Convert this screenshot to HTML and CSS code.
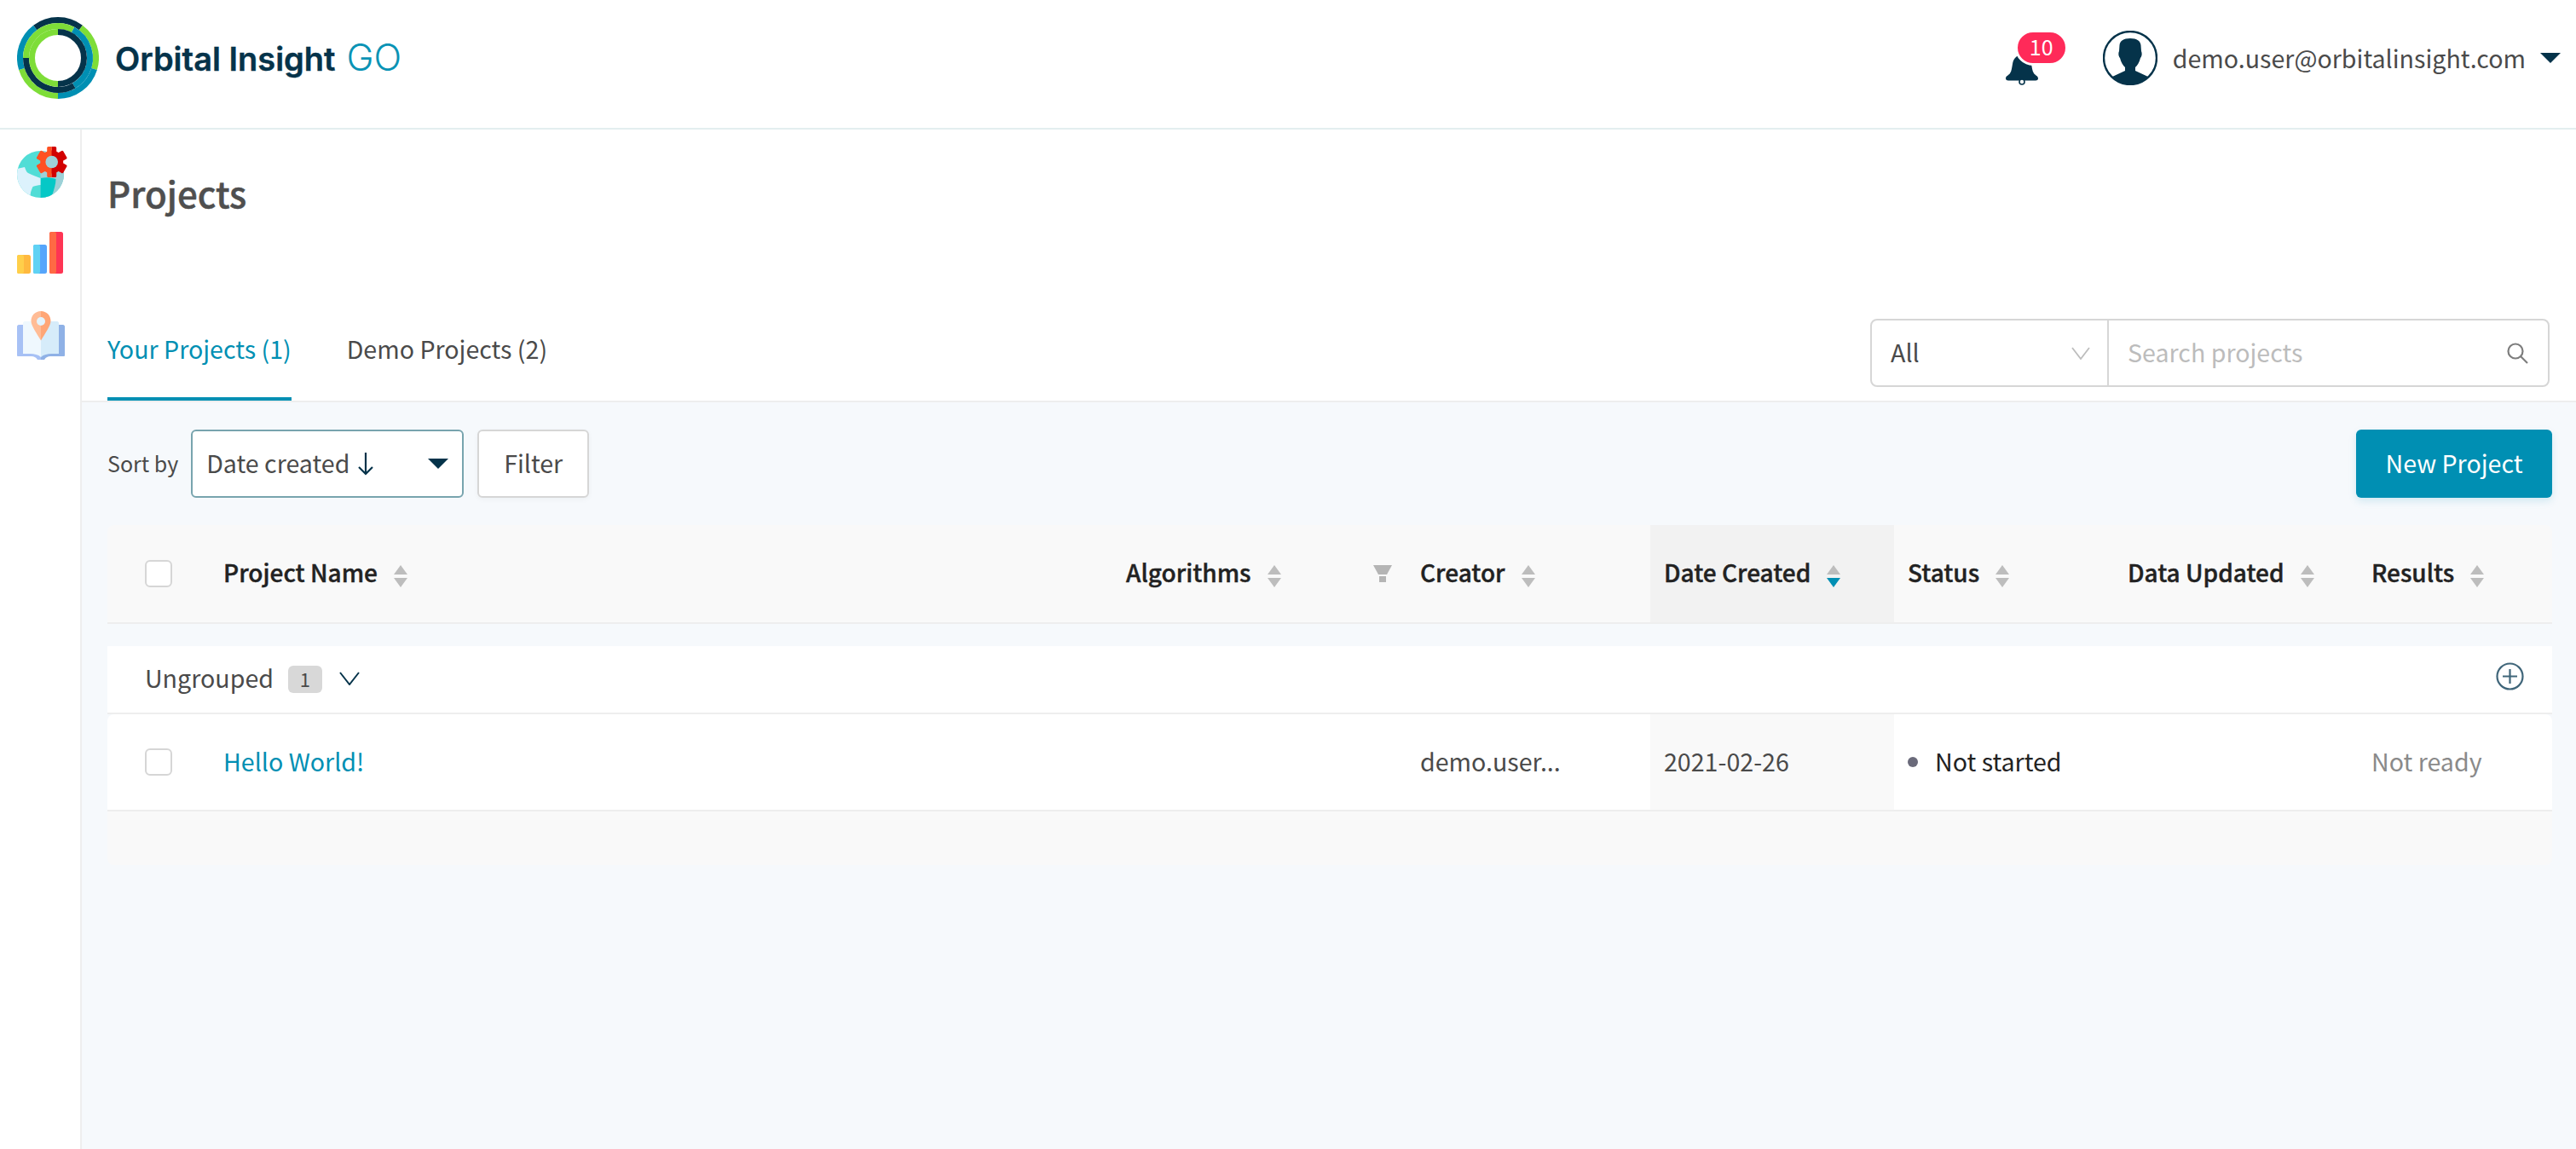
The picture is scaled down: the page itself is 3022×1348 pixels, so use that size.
FILE: index.html
```html
<!DOCTYPE html>
<html lang="en">
<head>
<meta charset="utf-8">
<title>Orbital Insight GO</title>
<link rel="stylesheet" href="styles.css">
</head>
<body>
<header class="topbar">
  <div class="brand">
    <svg class="logo" width="96" height="96" viewBox="0 0 96 96" fill="none" stroke-width="7">
      <g class="r1">
        <circle cx="48" cy="48" r="44.5" pathLength="360" stroke="#05334a" stroke-dasharray="74 286" transform="rotate(-127 48 48)"/>
        <circle cx="48" cy="48" r="44.5" pathLength="360" stroke="#7edd38" stroke-dasharray="70 290" transform="rotate(-53 48 48)"/>
        <circle cx="48" cy="48" r="44.5" pathLength="360" stroke="#008fb3" stroke-dasharray="73 287" transform="rotate(17 48 48)"/>
        <circle cx="48" cy="48" r="44.5" pathLength="360" stroke="#7edd38" stroke-dasharray="73 287" transform="rotate(90 48 48)"/>
        <circle cx="48" cy="48" r="44.5" pathLength="360" stroke="#008fb3" stroke-dasharray="70 290" transform="rotate(163 48 48)"/>
        <circle cx="48" cy="48" r="37.5" pathLength="360" stroke="#7edd38" stroke-dasharray="118 242" transform="rotate(180 48 48)"/>
        <circle cx="48" cy="48" r="37.5" pathLength="360" stroke="#008fb3" stroke-dasharray="122 238" transform="rotate(-62 48 48)"/>
        <circle cx="48" cy="48" r="37.5" pathLength="360" stroke="#05334a" stroke-dasharray="120 240" transform="rotate(60 48 48)"/>
        <circle cx="48" cy="48" r="30.5" pathLength="360" stroke="#05334a" stroke-dasharray="180 180" transform="rotate(-90 48 48)"/>
        <circle cx="48" cy="48" r="30.5" pathLength="360" stroke="#7edd38" stroke-dasharray="180 180" transform="rotate(90 48 48)"/>
      </g>
    </svg>
    <div class="wordmark"><span class="wm-name">Orbital Insight</span><span class="wm-go">GO</span></div>
  </div>
  <div class="account">
    <div class="bell">
      <svg width="38" height="36" viewBox="0 0 38 36">
        <path fill="#05334a" d="M19 0c-5 0-10 4-11 11-1 5-1 8-3 11-1 2-5 3-5 6 0 1.500 1 2.500 3 2.500h32c2 0 3-1 3-2.500 0-3-4-4-5-6-2-3-2-6-3-11C29 4 24 0 19 0z"/>
        <circle cx="19" cy="32" r="3" fill="#fff" stroke="#05334a" stroke-width="1.600"/>
      </svg>
      <span class="bell-badge">10</span>
    </div>
    <svg class="avatar" width="64" height="64" viewBox="0 0 64 64">
      <defs><clipPath id="avatar-clip"><circle cx="32" cy="32" r="30.500"/></clipPath></defs>
      <circle cx="32" cy="32" r="31" fill="#fff" stroke="#05334a" stroke-width="2.400"/>
      <path clip-path="url(#avatar-clip)" fill="#05334a" d="M32 9c-8 0-12 3-12.500 8L19 24c-1 2-1 6 1 8 1 5 4 9 6 11v4L11 54v10h42V54l-15-7v-4c2-2 5-6 6-11 2-2 2-6 1-8l-.5-7C44 12 40 9 32 9z"/>
    </svg>
    <span class="email">demo.user@orbitalinsight.com</span>
    <span class="caret caret-lg"></span>
  </div>
</header>

<div class="shell">
  <nav class="sidebar">
    <svg class="nav-globe" width="60" height="60" viewBox="0 0 60 60">
      <defs>
        <clipPath id="globe-clip"><circle cx="27.500" cy="32.500" r="27.500"/></clipPath>
        <clipPath id="gear-left"><rect x="20" y="-2" width="20.700" height="40"/></clipPath>
        <clipPath id="gear-right"><rect x="40.700" y="-2" width="21" height="40"/></clipPath>
        <g id="gear">
          <circle cx="40.700" cy="18" r="13.500"/>
          <rect x="35.200" y="0" width="11" height="36" rx="1.500"/>
          <rect x="35.200" y="0" width="11" height="36" rx="1.500" transform="rotate(60 40.700 18)"/>
          <rect x="35.200" y="0" width="11" height="36" rx="1.500" transform="rotate(120 40.700 18)"/>
        </g>
      </defs>
      <g clip-path="url(#globe-clip)">
        <rect y="5" width="60" height="55" fill="#51ddd6"/>
        <rect x="27.500" y="5" width="30" height="55" fill="#9ed0d7"/>
        <path fill="#05c8c6" d="M27.500 37c6-1 12-1 18 1 0 6-2 12-4 18l-3 4h-11z"/>
        <path fill="#dcf2fc" d="M0 26l9-2c1 3 2 6 4 7 4 2 9 4 14.500 6v8c-3 0-6 1-9 2-1 2-2 5-2.500 7l-1 6H0z"/>
      </g>
      <g clip-path="url(#gear-left)"><use href="#gear" fill="#ff5022"/></g>
      <g clip-path="url(#gear-right)"><use href="#gear" fill="#d20000"/></g>
      <circle cx="40.700" cy="18" r="7.300" fill="#9ed0d7"/>
    </svg>
    <svg class="nav-bars" width="54" height="49" viewBox="0 0 54 49">
      <rect y="27" width="16" height="22" rx="2.500" fill="#ffb93f"/>
      <rect y="27" width="8" height="22" rx="2" fill="#ffcf4a"/>
      <rect x="19" y="15" width="16" height="34" rx="2.500" fill="#56a5fb"/>
      <rect x="19" y="15" width="8" height="34" rx="2" fill="#5fd2f4"/>
      <rect x="38" width="16" height="49" rx="2.500" fill="#fe3554"/>
      <rect x="38" width="8" height="49" rx="2" fill="#ff6a44"/>
    </svg>
    <svg class="nav-book" width="56" height="57" viewBox="0 0 56 57">
      <path fill="#a7c1f5" d="M2 16h26v41H24c-2-3-4-4-7-4H1a1 1 0 0 1-1-1V18c0-1 1-2 2-2z"/>
      <path fill="#8fb1e6" d="M54 16H28v41h4c2-3 4-4 7-4h16a1 1 0 0 0 1-1V18c0-1-1-2-2-2z"/>
      <path fill="#eff8fe" d="M9 12h19v42c-3-3-8-4-12-4H7V14c0-1 1-2 2-2z"/>
      <path fill="#d6ecfa" d="M47 12H28v42c3-3 8-4 12-4h9V14c0-1-1-2-2-2z"/>
      <path fill="#ffbc96" d="M28 0C21.500 0 16.500 5 16.500 11.500c0 6 7 15 11.500 23z"/>
      <path fill="#ffa676" d="M28 0c6.500 0 11.500 5 11.500 11.500 0 6-7 15-11.500 23z"/>
      <circle cx="28" cy="12" r="5" fill="#e3f3fc"/>
    </svg>
  </nav>

  <main class="main">
    <section class="head">
      <h1 class="title">Projects</h1>
      <div class="tabbar">
        <div class="tabs">
          <a class="tab tab-active">Your Projects (1)</a>
          <a class="tab">Demo Projects (2)</a>
        </div>
        <div class="search">
          <div class="search-scope">
            <span class="label-sm">All</span>
            <svg width="22" height="15" viewBox="0 0 22 15" fill="none" stroke="#bdbdbd" stroke-width="1.800"><path d="M1 1l10 13L21 1"/></svg>
          </div>
          <div class="search-input">
            <span class="placeholder label-sm">Search projects</span>
            <svg width="26" height="25" viewBox="0 0 26 25" fill="none" stroke="#7d7d7d" stroke-width="2.200"><circle cx="10" cy="10" r="8.500"/><path d="M16 16l8 8"/></svg>
          </div>
        </div>
      </div>
    </section>

    <section class="body">
      <div class="toolbar">
        <span class="sort-label label-sm">Sort by</span>
        <div class="sort-select">
          <span class="sort-value label-sm">Date created</span>
          <svg class="sort-arrow" width="18" height="28" viewBox="0 0 18 28" fill="none" stroke="#05334a" stroke-width="2.200"><path d="M9 1v25M1 18l8 8 8-8"/></svg>
          <span class="caret"></span>
        </div>
        <button class="btn"><span class="label-sm">Filter</span></button>
        <button class="btn btn-primary"><span class="label-sm">New Project</span></button>
      </div>

      <div class="table">
        <div class="cols thead">
          <div class="cell cell-check"><span class="check"></span></div>
          <div class="cell"><span class="label">Project Name</span><span class="sorter"></span></div>
          <div class="cell"><span class="label">Algorithms</span><span class="sorter"></span>
            <svg class="col-filter" width="22" height="20" viewBox="0 0 22 20" fill="#b5b5b5"><path d="M0 0h22l-6 11H6z"/><rect x="7" y="13" width="8" height="7"/></svg>
          </div>
          <div class="cell"><span class="label">Creator</span><span class="sorter"></span></div>
          <div class="cell cell-sorted"><span class="label">Date Created</span><span class="sorter sorter-desc"></span></div>
          <div class="cell"><span class="label">Status</span><span class="sorter"></span></div>
          <div class="cell"><span class="label">Data Updated</span><span class="sorter"></span></div>
          <div class="cell"><span class="label">Results</span><span class="sorter"></span></div>
        </div>

        <div class="group">
          <span class="group-name label">Ungrouped</span>
          <span class="group-count">1</span>
          <svg class="group-chevron" width="24" height="16" viewBox="0 0 24 16" fill="none" stroke="#05334a" stroke-width="2"><path d="M1 1l11 14L23 1"/></svg>
          <svg class="group-add" width="33" height="33" viewBox="0 0 33 33" fill="none" stroke="#40667a" stroke-width="2.200"><circle cx="16.500" cy="16.500" r="15"/><path d="M16.500 8v17M8 16.500h17"/></svg>
        </div>

        <div class="cols row">
          <div class="cell cell-check"><span class="check"></span></div>
          <div class="cell"><a class="link label-sm">Hello World!</a></div>
          <div class="cell"></div>
          <div class="cell"><span class="label-sm">demo.user...</span></div>
          <div class="cell cell-sorted-light"><span class="label-sm">2021-02-26</span></div>
          <div class="cell status"><span class="dot"></span><span class="label-sm">Not started</span></div>
          <div class="cell"></div>
          <div class="cell muted"><span class="label-sm">Not ready</span></div>
        </div>
        <div class="table-foot"></div>
      </div>
    </section>
  </main>
</div>
</body>
</html>
```

FILE: styles.css
```css
* { box-sizing: border-box; }
html, body { margin: 0; height: 100%; }
body {
  font-family: "Noto Sans CJK SC", "Noto Sans", sans-serif;
  font-size: 28.6px;
  line-height: 40px;
  color: #4a4a4a;
  background: #fff;
  overflow: hidden;
  display: flex;
  flex-direction: column;
}

/* lift text a little to sit where the reference's baselines do */
.label { display: block; margin-bottom: 4px; white-space: nowrap; }
.label-sm { display: block; margin-bottom: 2px; white-space: nowrap; }

/* top bar */
.topbar {
  height: 152px;
  flex: none;
  display: flex;
  align-items: center;
  justify-content: space-between;
  padding: 0 18px 0 20px;
  border-bottom: 2px solid #e3eeef;
}
.brand { display: flex; align-items: center; }
.logo { display: block; margin-top: -14px; }
.wordmark {
  margin-left: 19px;
  margin-top: -14px;
  font-family: Inter, "Liberation Sans", sans-serif;
  font-size: 38px;
  line-height: 50px;
  white-space: nowrap;
}
.wm-name { color: #05334a; font-weight: 600; -webkit-text-stroke: .4px #05334a; }
.wm-go { color: #0a93b5; font-weight: 300; font-size: 43px; margin-left: 13px; }

.account { display: flex; align-items: center; margin-top: -14px; }
.bell { position: relative; width: 38px; height: 36px; margin-top: 28px; margin-right: 76px; }
.bell svg { display: block; }
.bell-badge {
  position: absolute;
  left: 11px;
  top: -29px;
  width: 62px;
  height: 42px;
  border: 3px solid #fff;
  border-radius: 21px;
  background: #ff2a59;
  color: #fff;
  font-size: 25px;
  line-height: 33px;
  text-align: center;
}
.avatar { display: block; }
.email { margin-left: 18px; white-space: nowrap; }
.caret {
  display: inline-block;
  width: 0;
  height: 0;
  border-left: 12px solid transparent;
  border-right: 12px solid transparent;
  border-top: 12px solid #05334a;
}
.caret-lg { margin-left: 17px; }

/* shell */
.shell { flex: 1; display: flex; min-height: 0; }
.sidebar {
  width: 96px;
  flex: none;
  border-right: 2px solid #eeeeee;
  padding: 20px 0 0 20px;
  display: flex;
  flex-direction: column;
}
.sidebar svg { display: block; }
.nav-bars { margin-top: 40px; }
.nav-book { margin-top: 44px; }

.main { flex: 1; min-width: 0; display: flex; flex-direction: column; }

/* heading + tabs */
.head { flex: none; padding: 44px 31px 0 30px; border-bottom: 2px solid #eeeeee; }
.title { margin: 0; font-size: 42px; line-height: 60px; font-weight: 500; color: #4f4f4f; -webkit-text-stroke: .5px #4f4f4f; }
.tabbar { margin-top: 118px; height: 96px; display: flex; justify-content: space-between; align-items: flex-start; }
.tabs { display: flex; gap: 65px; height: 96px; }
.tab { display: block; height: 96px; padding-top: 15px; white-space: nowrap; }
.tab-active { color: #008fb3; border-bottom: 4px solid #008fb3; }

.search { width: 797px; height: 80px; display: flex; background: #fff; border: 2px solid #d6d6d6; border-radius: 8px; }
.search-scope {
  width: 278px;
  display: flex;
  align-items: center;
  justify-content: space-between;
  padding: 0 20px 0 22px;
  border-right: 2px solid #d6d6d6;
}
.search-input { flex: 1; display: flex; align-items: center; justify-content: space-between; padding: 0 22px; }
.search svg { display: block; }
.placeholder { color: #bcbcbc; }

/* body */
.body { flex: 1; min-height: 0; background: #f6f9fc; padding: 32px 28px 0 30px; }
.toolbar { display: flex; align-items: center; height: 80px; }
.sort-label { font-size: 25px; }
.sort-select {
  margin-left: 15px;
  width: 320px;
  height: 80px;
  display: flex;
  align-items: center;
  padding: 0 16px 0 16px;
  background: #fff;
  border: 2px solid #78a4ae;
  border-radius: 6px;
}
.sort-arrow { margin-left: 10px; display: block; }
.sort-select .caret { margin-left: auto; }
.btn {
  font: inherit;
  color: inherit;
  height: 80px;
  padding: 0 29px;
  background: #fff;
  border: 2px solid #d6d6d6;
  border-radius: 6px;
  margin-left: 16px;
  box-shadow: 0 2px 6px rgba(0, 0, 0, .04);
}
.btn-primary {
  margin-left: auto;
  width: 230px;
  padding: 0;
  border: 0;
  background: #008fb3;
  color: #fff;
  box-shadow: 0 4px 10px rgba(0, 143, 179, .15);
}

/* table */
.table { margin-top: 32px; }
.cols { display: grid; grid-template-columns: 120px 1059px 345px 286px 286px 258px 286px 228px; }
.cell { display: flex; align-items: center; padding-left: 16px; white-space: nowrap; min-width: 0; }
.cell-check { padding-left: 44px; }
.thead {
  height: 116px;
  background: #f9f9f9;
  border-bottom: 2px solid #eeeeee;
  border-radius: 8px 8px 0 0;
  color: #222;
  font-size: 28px;
  font-weight: 500;
  -webkit-text-stroke: .4px #222;
}
.cell-sorted { background: #f2f2f2; }
.cell-sorted-light { background: #f9f9f9; }
.check { display: block; width: 32px; height: 32px; background: #fff; border: 2px solid #d6d6d6; border-radius: 6px; }
.sorter { position: relative; display: block; width: 16px; height: 26px; margin-left: 19px; margin-top: 6px; flex: none; }
.sorter::before, .sorter::after {
  content: "";
  position: absolute;
  left: 0;
  border-left: 8px solid transparent;
  border-right: 8px solid transparent;
}
.sorter::before { top: 0; border-bottom: 11px solid #bdbdbd; }
.sorter::after { bottom: 0; border-top: 11px solid #bdbdbd; }
.sorter-desc::after { border-top-color: #008fb3; }
.col-filter { margin-left: auto; margin-right: 17px; display: block; }

.group {
  margin-top: 26px;
  height: 80px;
  display: flex;
  align-items: center;
  padding: 0 33px 0 44px;
  background: #fff;
  border-bottom: 2px solid #eeeeee;
}
.group-count {
  margin-left: 17px;
  width: 40px;
  height: 32px;
  border-radius: 6px;
  background: #d8d8d8;
  font-size: 22px;
  line-height: 30px;
  text-align: center;
}
.group-chevron { margin-left: 20px; display: block; margin-top: -2px; }
.group-add { margin-left: auto; display: block; margin-top: -8px; }

.row { height: 114px; background: #fff; border-bottom: 2px solid #eeeeee; border-radius: 8px 8px 0 0; }
.link { color: #008fb3; }
.status { color: #222; }
.dot { display: block; width: 12px; height: 12px; border-radius: 50%; background: #6a6a7a; margin-right: 20px; }
.muted { color: #8a8a8a; }
.table-foot { height: 63px; background: #f9f9f9; border-radius: 0 0 8px 8px; }
```
